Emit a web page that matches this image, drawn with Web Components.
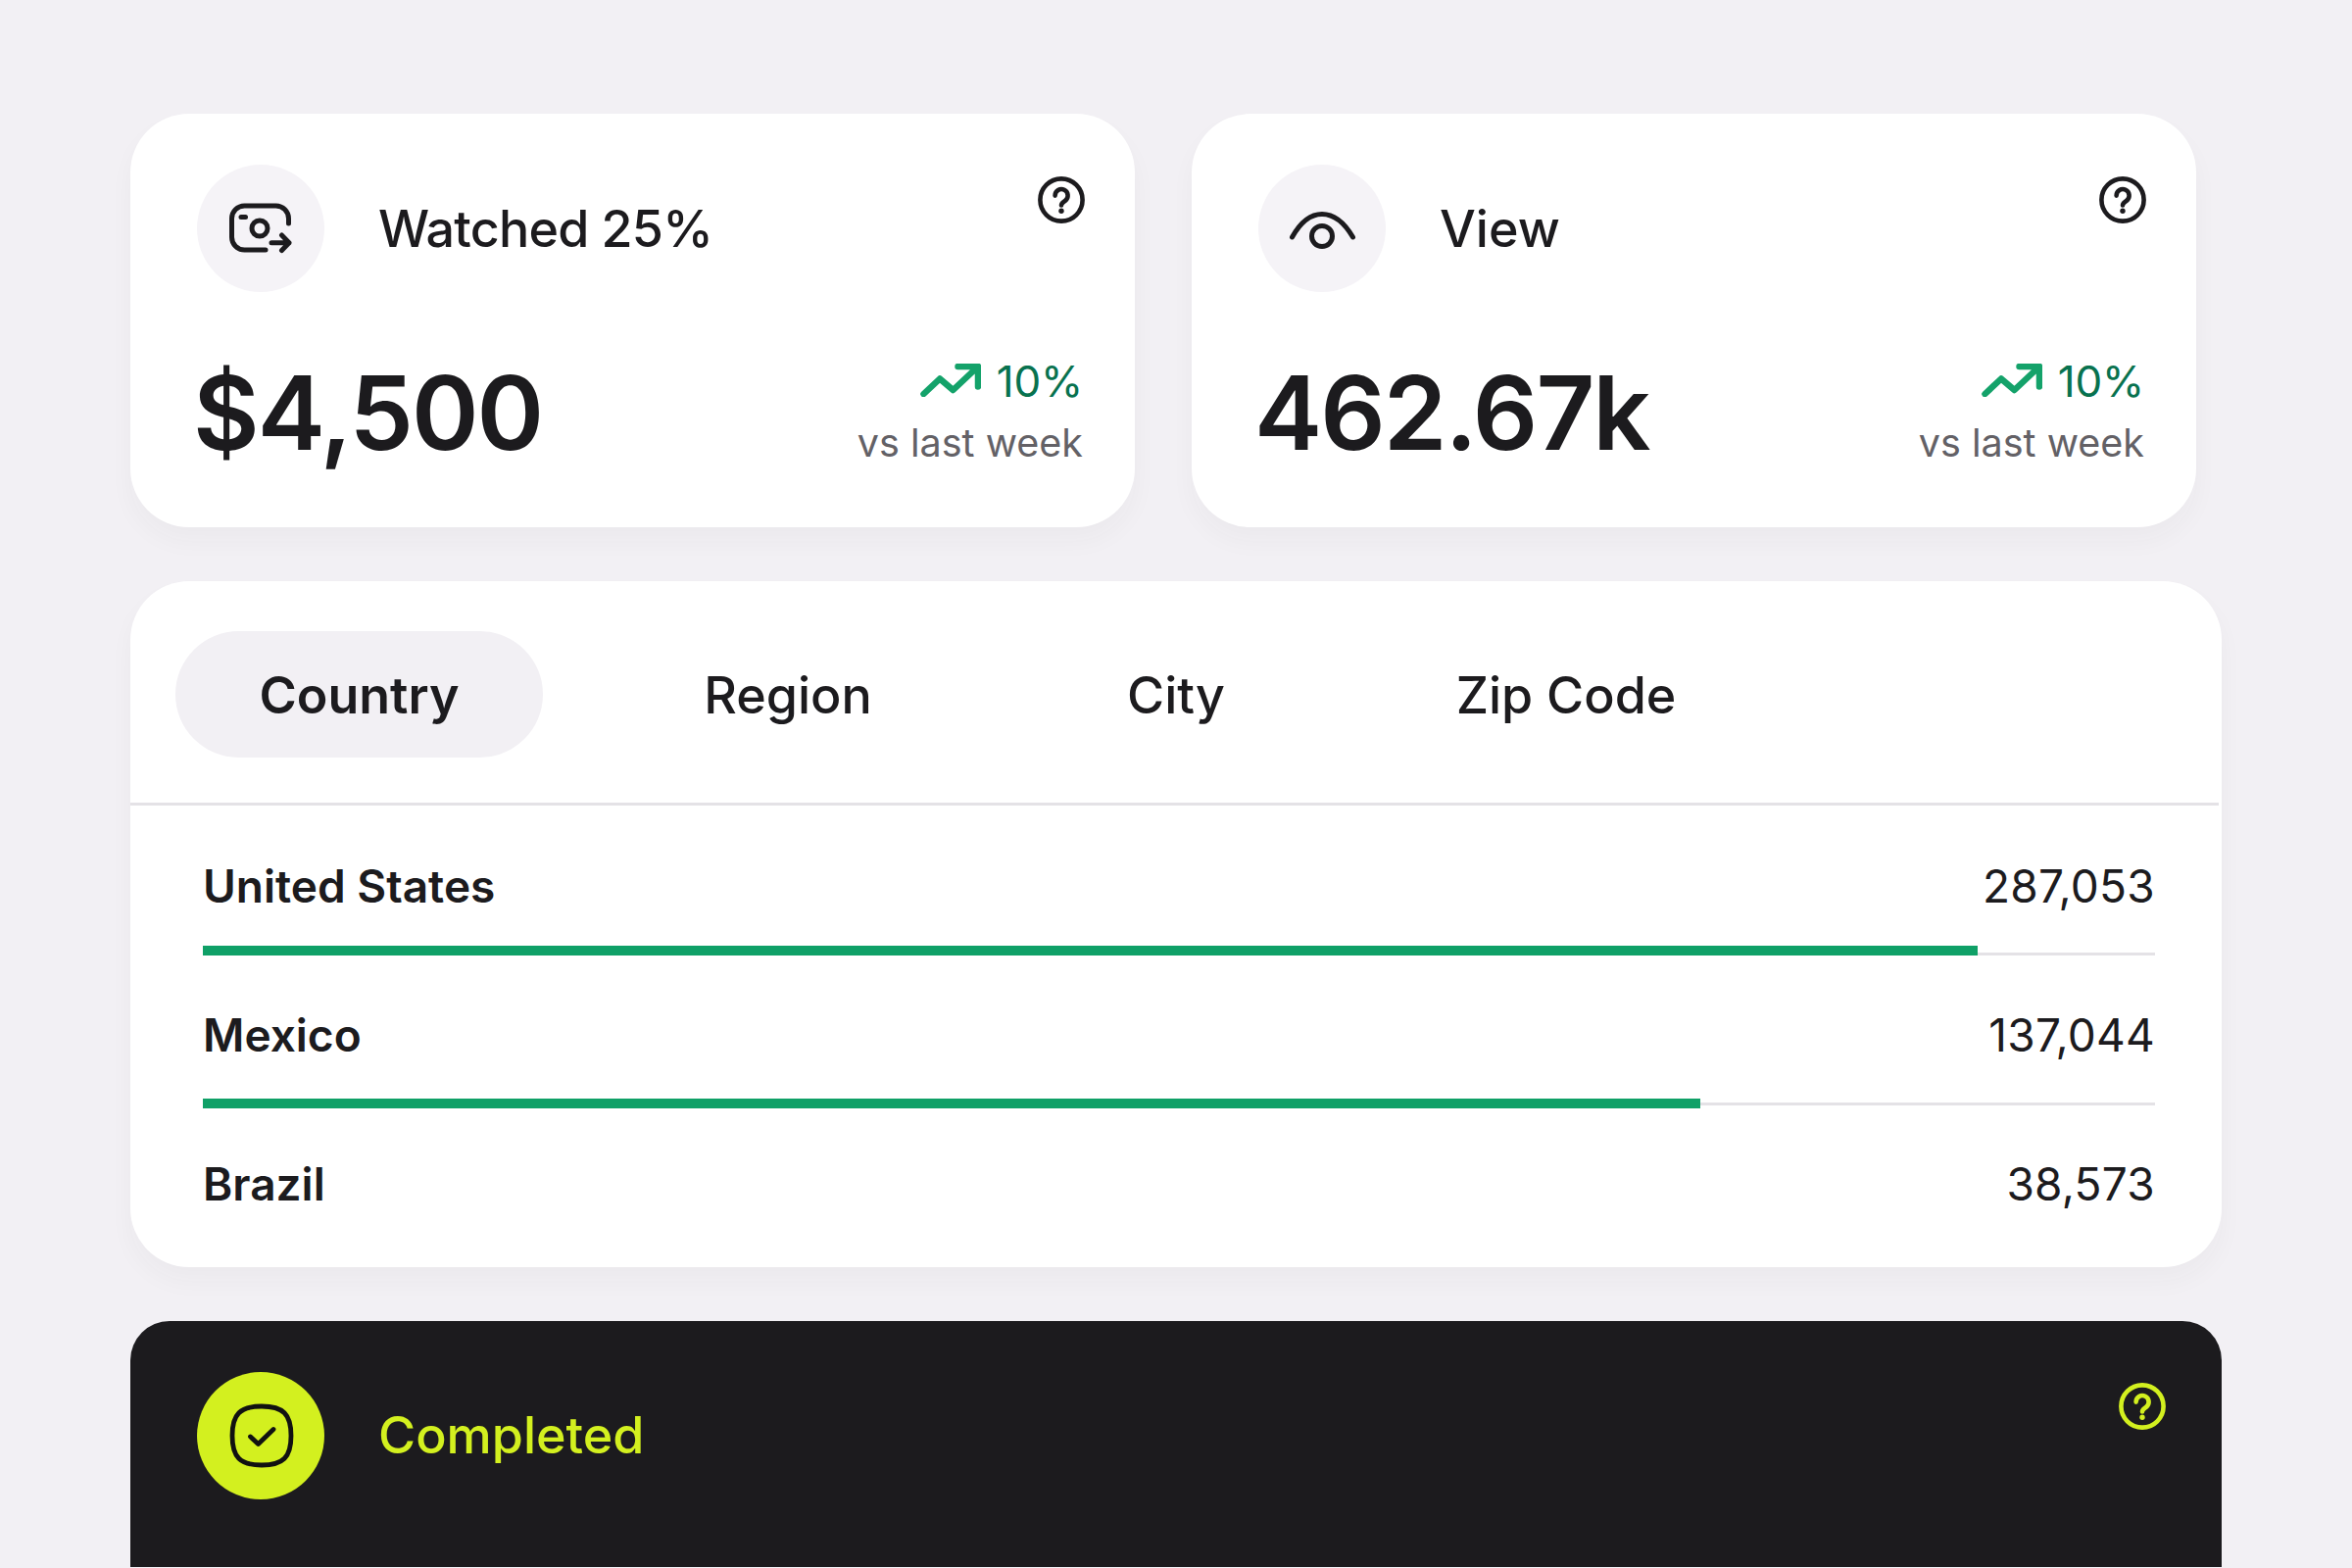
<!doctype html>
<html><head><meta charset="utf-8"><title>Stats</title>
<style>
html,body{margin:0;height:1600px;overflow:hidden;background:#f2f0f4;font-family:Inter,"Liberation Sans",sans-serif;color:#1c1b1e}
</style></head><body>
<stats-page></stats-page>
<script>
const helpIcon = c => `<svg width="48" height="48" viewBox="0 0 48 48" fill="none" stroke="${c}" stroke-width="4.6" stroke-linecap="round" aria-hidden="true"><circle cx="24" cy="24" r="21.6"/><path d="M17.6 19.6a6.5 6.5 0 1 1 10.4 5.2c-2.6 1.700-4 2.800-4 4.600" stroke-linejoin="round"/><circle cx="24" cy="35.200" r="2.700" fill="${c}" stroke="none"/></svg>`;
const icons = {
 camera:`<svg width="130" height="130" viewBox="0 0 130 130" fill="none" stroke="#1c1b1e" stroke-width="5" stroke-linecap="round" stroke-linejoin="round"><g transform="translate(-2 0)"><path d="M95.500 60V55a13 13 0 0 0-13-13H50.500a13 13 0 0 0-13 13V74a13 13 0 0 0 13 13H72"/><path d="M47 53.500h4.500"/><circle cx="66" cy="65" r="8"/><path d="M78 79.700H96M88.500 72l7.500 7.700-7.500 7.800"/></g></svg>`,
 eye:`<svg width="130" height="130" viewBox="0 0 130 130" fill="none" stroke="#1c1b1e" stroke-width="5" stroke-linecap="round"><path d="M34.500 74C44 57 54 50.500 65 50.500S86.500 57 96.500 74"/><circle cx="65" cy="73" r="10.500"/></svg>`,
 check:`<svg width="130" height="130" viewBox="0 0 130 130" fill="none" stroke="#111" stroke-width="4.800" stroke-linecap="round" stroke-linejoin="round"><path d="M66 35C88 35 96 43 96 65S88 95 66 95 36 87 36 65 44 35 66 35Z"/><path d="M54.500 66l8 7.500 15.500-15"/></svg>`
};
function def(name, css, html){
  customElements.define(name, class extends HTMLElement{
    connectedCallback(){
      if(this.shadowRoot) return;
      const r=this.attachShadow({mode:'open'});
      r.innerHTML=`<style>${css}</style>`+(typeof html==='function'?html(this):html);
    }
  });
}
def('help-icon',':host{display:block;width:48px;height:48px;line-height:0}',e=>helpIcon(e.getAttribute('color')||'#1c1b1e'));
def('icon-disc',':host{display:block;width:130px;height:130px;border-radius:50%;background:var(--disc,#f5f3f7);line-height:0;flex:none}',e=>icons[e.getAttribute('name')]);
def('trend-label',`:host{display:flex;justify-content:flex-end;align-items:center;gap:16px;color:#08724f;font-size:44px;line-height:54px;letter-spacing:-.2px}
svg{display:block;margin-top:-3px}`,()=>`<svg width="62" height="34" viewBox="0 0 62 34" fill="none" stroke="#14a26a" stroke-width="6.500" stroke-linecap="round" stroke-linejoin="round"><path d="M3.500 31 20 15.500 33.500 27 59 3M38.500 3H59V23.500"/></svg><span><slot></slot></span>`);
def('stat-card',`:host{display:block;width:1025px;height:422px;box-sizing:border-box;background:#fff;border-radius:60px;box-shadow:0 14px 26px rgba(60,50,70,.035);padding:52px 51px 0 68px}
.head{display:flex;align-items:center;gap:55px}
.title{font-size:52px;line-height:64px;flex:1;font-weight:500;padding-top:2px}
help-icon{align-self:flex-start;margin-top:12px}
.foot{display:flex;justify-content:space-between;align-items:flex-start;margin-top:63px}
.value{font-size:104px;font-weight:600;line-height:120px;letter-spacing:-2px;margin-left:-4px}
.sub{font-size:39.500px;line-height:48px;color:#636166;margin-top:12px;text-align:right}
.right{margin-top:1px;margin-right:2px}`,e=>`<div class="head"><icon-disc name="${e.getAttribute('icon')}"></icon-disc><div class="title" style="letter-spacing:${e.getAttribute('tracking')||0}">${e.getAttribute('title')}</div><help-icon></help-icon></div>
<div class="foot"><div class="value">${e.getAttribute('value')}</div><div class="right"><trend-label>${e.getAttribute('trend')}</trend-label><div class="sub">vs last week</div></div></div>`);
def('tab-item',`:host{display:flex;align-items:center;justify-content:center;height:129px;border-radius:65px;font-size:52px;font-weight:500;box-sizing:border-box;flex:none;white-space:nowrap;padding-top:2px}
:host([active]){background:#f2f0f4;font-weight:600}`,`<slot></slot>`);
def('tab-bar',`:host{display:flex;align-items:flex-start;height:229px;box-sizing:border-box;padding:51px 0 0 46px;border-bottom:3px solid #e4e2e6;margin-right:3px}`,`<slot></slot>`);
def('geo-row',`:host{display:block;padding:0 68px 0 74px}
.line{display:flex;justify-content:space-between;align-items:center;box-sizing:border-box;height:var(--line,143px);padding-top:var(--pad,20px);font-size:46px}
.name{font-weight:600}
.count{letter-spacing:.25px}
.bar{height:10px;display:flex;align-items:stretch;background:linear-gradient(to top,transparent var(--track,0px),#e4e2e6 var(--track,0px),#e4e2e6 calc(var(--track,0px) + 3px),transparent calc(var(--track,0px) + 3px))}
.fill{background:#0fa067}`,e=>{const f=e.getAttribute('fill');return `<div class="line"><span class="name">${e.getAttribute('name')}</span><span class="count">${e.getAttribute('count')}</span></div>`+(f?`<div class="bar"><div class="fill" style="width:${f}%"></div></div>`:'')});
def('geo-card',`:host{display:block;height:700px;box-sizing:border-box;background:#fff;border-radius:60px;box-shadow:0 14px 26px rgba(60,50,70,.035);overflow:hidden}`,`<slot></slot>`);
def('status-card',`:host{display:flex;height:251px;box-sizing:border-box;background:#1c1b1e;border-radius:40px 40px 0 0;padding:52px 57px 0 68px;color:#d3f01f;--disc:#d3f01f}
.row{display:flex;align-items:center;gap:55px;width:100%;height:130px}
.title{font-size:52px;line-height:64px;flex:1;font-weight:500}
help-icon{align-self:flex-start;margin-top:11px}`,e=>`<div class="row"><icon-disc name="check"></icon-disc><div class="title">${e.getAttribute('title')}</div><help-icon color="#d3f01f"></help-icon></div>`);
def('stats-page',`:host{display:block;padding:116px 0 0 133px}
.col{width:2134px;display:flex;flex-direction:column;gap:55px}
.top{display:flex;gap:58px}`,`<div class="col"><div class="top">
<stat-card icon="camera" title="Watched 25%" tracking="-.8px" value="$4,500" trend="10%"></stat-card>
<stat-card icon="eye" title="View" value="462.67k" trend="10%"></stat-card></div>
<geo-card>
<tab-bar>
<tab-item active style="width:375px">Country</tab-item>
<tab-item style="width:170px;margin-left:165px">Region</tab-item>
<tab-item style="width:100px;margin-left:261px">City</tab-item>
<tab-item style="width:224px;margin-left:236px">Zip Code</tab-item>
</tab-bar>
<geo-row name="United States" count="287,053" fill="90.9"></geo-row>
<geo-row name="Mexico" count="137,044" fill="76.7" style="--line:146px;--pad:15px;--track:3px"></geo-row>
<geo-row name="Brazil" count="38,573" style="--line:141px;--pad:13px"></geo-row>
</geo-card>
<status-card title="Completed"></status-card>
</div>`);
</script>
</body></html>
